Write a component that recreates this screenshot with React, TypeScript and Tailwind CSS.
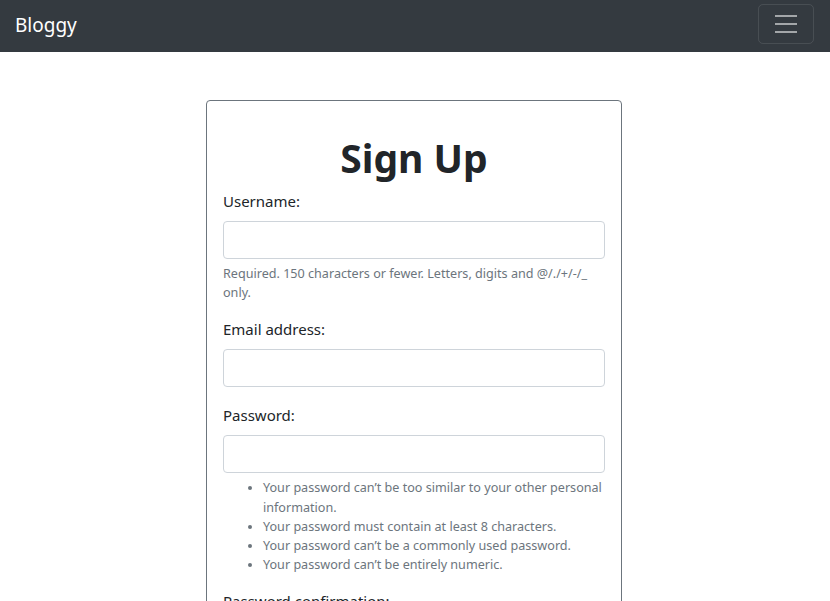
const FONT = "font-['Noto_Sans','Open_Sans',sans-serif]";

function TogglerIcon() {
  return (
    <svg width="30" height="30" viewBox="0 0 30 30" className="block">
      <path
        d="M4 7h22M4 15h22M4 23h22"
        stroke="rgba(255,255,255,0.55)"
        strokeWidth="2"
        strokeLinecap="butt"
        fill="none"
      />
    </svg>
  );
}

function Field({ label, type = 'text' }: { label: string; type?: string }) {
  return (
    <>
      <label className="block text-[15px] leading-[24px] text-[#212529] mb-2">{label}</label>
      <input
        type={type}
        className="block w-full h-[38px] px-3 border border-[#ced4da] rounded-[4px] bg-white outline-none"
      />
    </>
  );
}

const pwRules = [
  'Your password can’t be too similar to your other personal information.',
  'Your password must contain at least 8 characters.',
  'Your password can’t be a commonly used password.',
  'Your password can’t be entirely numeric.',
];

export default function App() {
  return (
    <div className={`${FONT} min-h-[601px] bg-white`}>
      <nav className="h-[52px] bg-[#343a40] flex items-center justify-between pl-[15px] pr-4">
        <a className="text-white text-[19px] leading-[30px] mb-[2px]">Bloggy</a>
        <button className="w-[56px] h-[40px] mb-1 border border-white/10 rounded-[5px] flex items-center justify-center">
          <TogglerIcon />
        </button>
      </nav>

      <div className="mt-12 ml-[206px] w-[416px] border border-[#6c757d] rounded-[4px] px-4 pt-[33px] pb-4">
        <h1 className="text-center font-bold text-[39px] leading-[48px] text-[#212529] mb-[7px]">Sign Up</h1>

        <div className="mb-[15px]">
          <Field label="Username:" />
          <p className="mt-[5px] text-[12.6px] leading-[19.2px] text-[#6c757d]">
            Required. 150 characters or fewer. Letters, digits and @/./+/-/_ only.
          </p>
        </div>

        <div className="mb-4">
          <Field label="Email address:" type="email" />
        </div>

        <div className="mb-[15px]">
          <Field label="Password:" type="password" />
          <ul className="mt-[5px] pl-10 list-disc text-[12.6px] leading-[19.2px] text-[#6c757d]">
            {pwRules.map((r) => (
              <li key={r}>{r}</li>
            ))}
          </ul>
        </div>

        <div className="mb-4">
          <Field label="Password confirmation:" type="password" />
          <p className="mt-1 text-[12.6px] leading-[19.2px] text-[#6c757d]">
            Enter the same password as before, for verification.
          </p>
        </div>

        <button className="bg-[#007bff] text-white rounded-[4px] px-3 h-[38px] text-[16px]">Sign Up</button>
      </div>
    </div>
  );
}
